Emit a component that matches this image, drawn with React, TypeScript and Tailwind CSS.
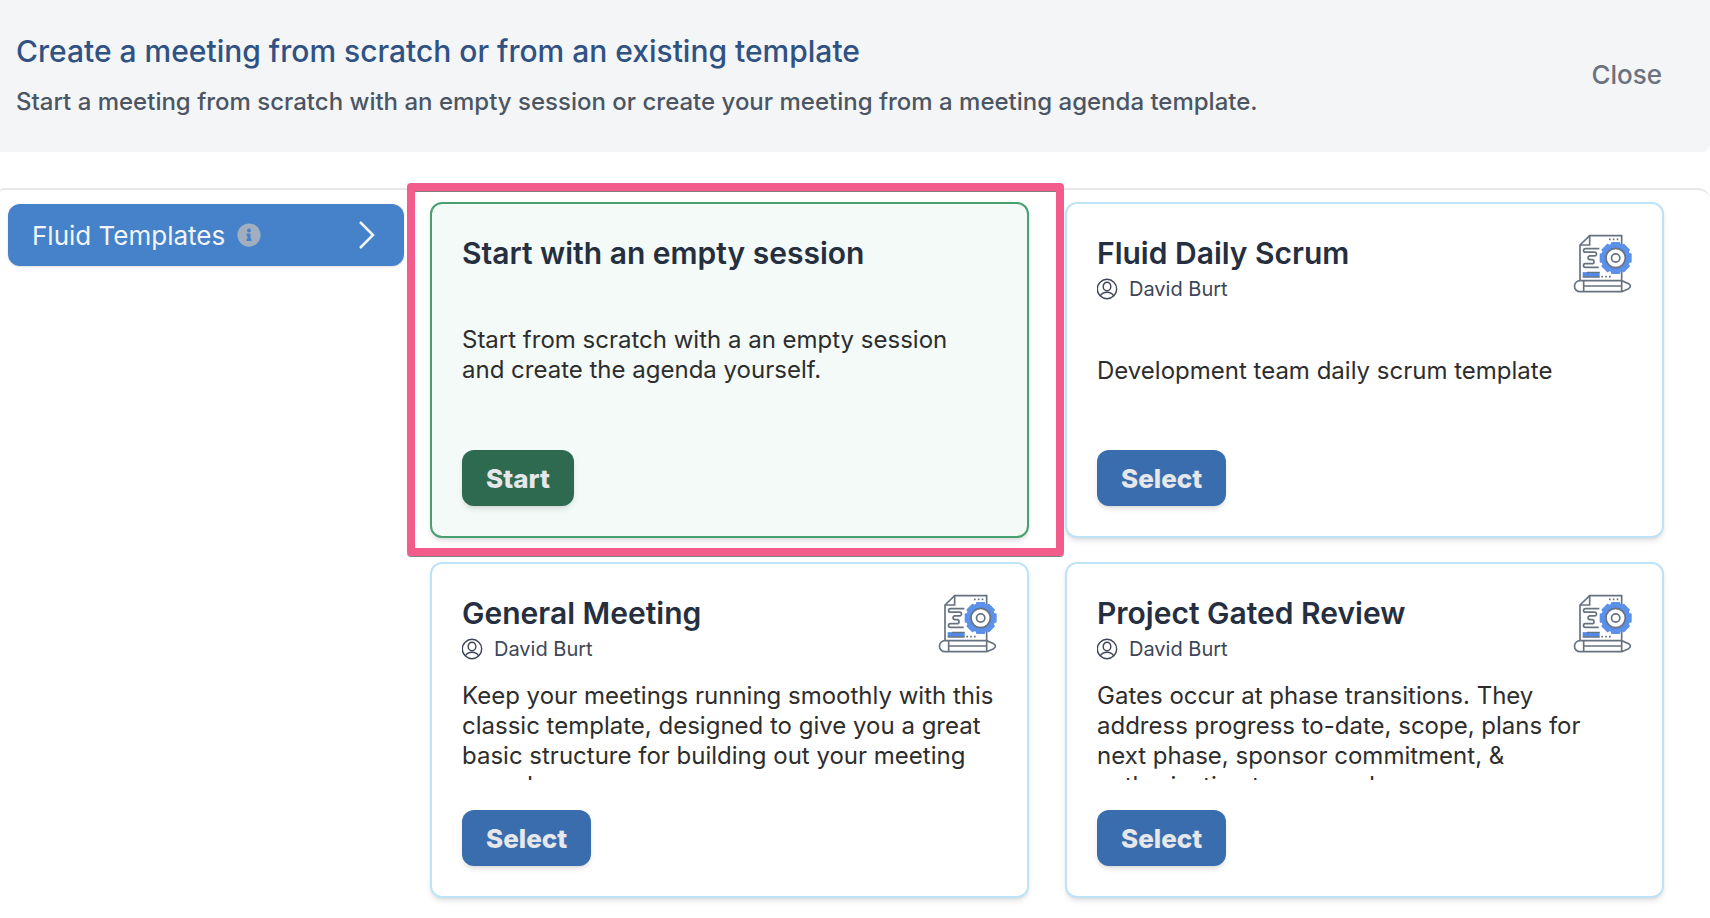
import { FaInfoCircle } from "react-icons/fa"

const templates = [
  {
    id: 1,
    title: "Fluid Daily Scrum",
    author: "David Burt",
    description: "Development team daily scrum template",
  },
  {
    id: 2,
    title: "General Meeting",
    author: "David Burt",
    description:
      "Keep your meetings running smoothly with this classic template, designed to give you a great basic structure for building out your meeting agenda.",
  },
  {
    id: 3,
    title: "Project Gated Review",
    author: "David Burt",
    description:
      "Gates occur at phase transitions. They address progress to-date, scope, plans for next phase, sponsor commitment, & authorization to proceed.",
  },
]

const gearTeeth = [0, 45, 90, 135]

function TemplateIcon() {
  return (
    <svg
      className="size-[58px] shrink-0 overflow-visible"
      viewBox="2 -2 174 174"
      fill="none"
      stroke="#66727f"
      strokeWidth="5"
      aria-hidden="true"
    >
      <path d="M20 136V31L49 3h96v133" fill="#fff" />
      <path d="M20 31h29V3" />
      <path
        d="M78 42H36a5 5 0 0 0 0 10.500H64a5 5 0 0 1 0 11H50a5 5 0 0 0 0 11.500H56a5 5 0 0 1 0 12H36a5 5 0 0 0 0 11H76"
        strokeWidth="5"
      />
      <path d="M28 119.500h51" stroke="#5389e6" strokeWidth="14" />
      <path d="M28 127h51M41 113h38" strokeWidth="4" />
      <path d="M107 14h28M84 126h28" strokeWidth="5" strokeDasharray="5 6.500" />
      <g fill="#5b91ea" stroke="none">
        <circle cx="127" cy="70" r="44" />
        {gearTeeth.map((angle) => (
          <rect key={angle} x="113" y="22" width="28" height="96" rx="3" transform={`rotate(${angle} 127 70)`} />
        ))}
      </g>
      <circle cx="127" cy="70" r="29" fill="#fff" />
      <circle cx="127" cy="70" r="12.500" />
      <path d="M145 138H20a16.500 16.500 0 0 0 0 33H145l21-9q10-7 0-15zM31 138v33M31 154H145M145 138v33" fill="#fff" />
    </svg>
  )
}

function UserIcon() {
  return (
    <svg className="size-[22px]" viewBox="1 0 22 22" fill="none" stroke="currentColor" strokeWidth="1.400" aria-hidden="true">
      <circle cx="11" cy="11" r="9.700" />
      <ellipse cx="11" cy="8.500" rx="3.800" ry="4.300" />
      <path d="M4.300 17.800c1.500-2.600 4-3.600 6.700-3.600s5.200 1 6.700 3.600" />
    </svg>
  )
}

function TemplateCard({ title, author, description }: { title: string; author: string; description: string }) {
  return (
    <article className="flex h-[336px] flex-col rounded-xl border-2 border-[#bee3f8] bg-white p-[30px] shadow-md">
      <div className="flex justify-between">
        <div className="flex flex-col gap-0.5">
          <h2 className="text-[30px] leading-[38px] font-semibold text-[#252f3f]">{title}</h2>
          <p className="flex items-center gap-2.5 text-xl leading-[30px] text-[#3d4657]">
            <UserIcon />
            {author}
          </p>
        </div>
        <TemplateIcon />
      </div>
      <div className="mt-[17px] flex min-h-0 flex-1 flex-col overflow-hidden pr-[3px]">
        <p className="my-auto text-2xl leading-[30px] text-[#2d2d2d]">{description}</p>
      </div>
      <button className="mt-[30px] h-14 self-start rounded-xl bg-[#3a6dae] px-6 text-[26px] font-extrabold text-gray-200 shadow-md">
        Select
      </button>
    </article>
  )
}

export default function App() {
  return (
    <div className="min-h-screen bg-white font-['Inter',sans-serif]">
      <header className="flex items-center justify-between rounded-br-lg bg-[#f4f5f7] pt-8 pr-12 pb-8 pl-4">
        <div className="flex flex-col gap-3.5">
          <h1 className="text-[30px] leading-[38px] font-medium text-[#2f5283]">
            Create a meeting from scratch or from an existing template
          </h1>
          <p className="text-2xl leading-9 font-medium text-[#4b5563]">
            Start a meeting from scratch with an empty session or create your meeting from a meeting agenda template.
          </p>
        </div>
        <button className="pb-1 text-[26px] font-medium text-[#6b7280]">Close</button>
      </header>

      <main className="mt-9 flex items-start rounded-tl-sm rounded-tr-xl border-t-2 border-gray-200 pt-3">
        <nav className="mt-0.5 w-[430px] shrink-0 pr-[26px] pl-2">
          <button className="flex h-[62px] w-full items-center rounded-xl bg-[#4682c9] pr-[26px] pl-6 text-[26px] text-gray-100 shadow-sm">
            Fluid Templates
            <FaInfoCircle className="ml-3 size-6 text-[#a0aec0]" />
            <svg className="ml-auto h-7 w-5" viewBox="0 0 20 28" fill="none" stroke="currentColor" strokeWidth="2.500" aria-hidden="true">
              <path d="M2 1l13 13L2 27" />
            </svg>
          </button>
        </nav>

        <section className="grid flex-1 grid-cols-2 gap-x-9 gap-y-6 pr-[46px]">
          <div className="relative">
            <article className="flex h-[336px] flex-col rounded-xl border-2 border-[#489f70] bg-[#f3faf7] p-[30px] shadow-md">
              <h2 className="text-[30px] leading-[38px] font-semibold text-[#252f3f]">Start with an empty session</h2>
              <div className="mt-[17px] flex min-h-0 flex-1 flex-col overflow-hidden pr-[3px]">
                <p className="my-auto text-2xl leading-[30px] text-[#2d2d2d]">
                  Start from scratch with a an empty session and create the agenda yourself.
                </p>
              </div>
              <button className="mt-[30px] h-14 self-start rounded-xl bg-[#2d6a4f] px-6 text-[26px] font-extrabold text-gray-200 shadow-md">
                Start
              </button>
            </article>
            {/* highlight around the empty session card */}
            <div className="pointer-events-none absolute -top-[19px] -right-[35px] -bottom-[18px] -left-[23px] rounded-sm border-8 border-[#f45b8d] shadow-[0_1px_0_#808080,inset_0_1px_0_#808080]" />
          </div>
          {templates.map((template) => (
            <TemplateCard
              key={template.id}
              title={template.title}
              author={template.author}
              description={template.description}
            />
          ))}
        </section>
      </main>
    </div>
  )
}
